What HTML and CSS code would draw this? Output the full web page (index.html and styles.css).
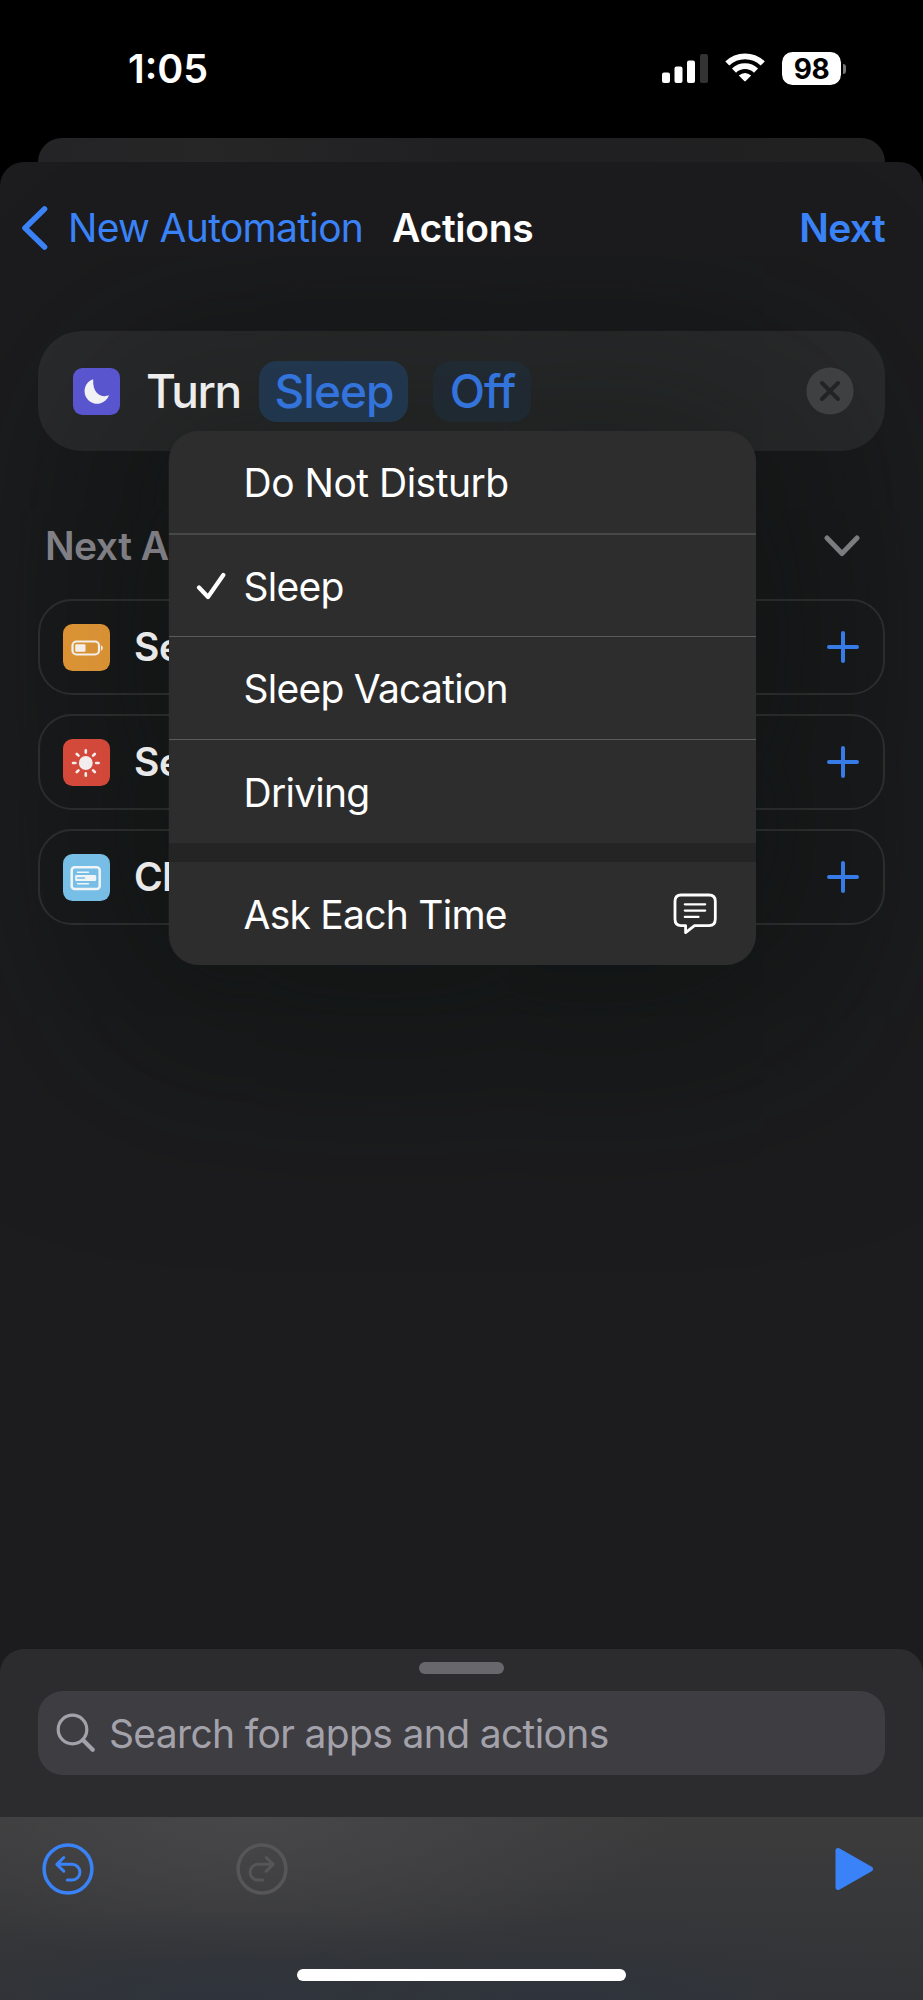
FILE: index.html
```html
<!DOCTYPE html>
<html lang="en">
<head>
<meta charset="utf-8">
<title>Actions</title>
<link rel="stylesheet" href="styles.css">
</head>
<body>
<div class="phone">
  <header class="status">
    <span class="time">1:05</span>
    <div class="status-icons">
      <svg class="signal" width="46" height="30" viewBox="0 0 46 30"><g fill="#fff"><rect x="0" y="18.500" width="8" height="10.500" rx="2"/><rect x="12.500" y="12.500" width="8" height="16.500" rx="2"/><rect x="25" y="6.500" width="8" height="22.500" rx="2"/></g><rect x="38" y="0" width="8" height="29" rx="2" fill="#333"/></svg>
      <svg class="wifi" width="40" height="30" viewBox="0 0 40 30"><g fill="none" stroke="#fff" stroke-width="5.800"><path d="M2.300 10.500A25.500 25.500 0 0 1 37.700 10.500"/><path d="M9 17.600A15.700 15.700 0 0 1 31 17.600"/></g><path d="M13.800 22.600Q20 17.600 26.200 22.600L21 27.800Q20 28.800 19 27.800Z" fill="#fff"/></svg>
      <div class="battery">98</div>
      <div class="battery-cap"></div>
    </div>
  </header>
  <div class="sheet-behind"></div>
  <main class="sheet">
    <div class="menu-shade"></div>
    <nav class="nav">
      <a class="back">
        <svg width="28" height="46" viewBox="0 0 28 46" fill="none" stroke="#3a82f7" stroke-width="5.600" stroke-linecap="round" stroke-linejoin="round"><path d="M24.500 4L5 23L24.500 42"/></svg>
        <span class="back-label">New Automation</span>
      </a>
      <h1 class="title">Actions</h1>
      <a class="next">Next</a>
    </nav>
    <section class="action-card">
      <svg class="app-icon" width="47" height="47" viewBox="0 0 47 47"><rect width="47" height="47" rx="9.500" fill="#5956d0"/><path d="M20.200 11.200A12.600 12.600 0 1 0 36 27.300C29 30 19.300 26.500 20.200 11.200Z" fill="#f3f3f5"/></svg>
      <span class="verb">Turn</span>
      <span class="token token-focus">Sleep</span>
      <span class="token token-state">Off</span>
      <svg class="clear" width="48" height="48" viewBox="0 0 48 48"><circle cx="24" cy="24" r="23.600" fill="#404142"/><path d="M16 16L32 32M32 16L16 32" stroke="#232424" stroke-width="4" stroke-linecap="round"/></svg>
    </section>
    <div class="section-head">
      <h2 class="section-title">Next Action</h2>
      <svg width="37" height="22" viewBox="0 0 37 22" fill="none" stroke="#7e7e82" stroke-width="5" stroke-linecap="round" stroke-linejoin="round"><path d="M4 3L19 18.500L34 3"/></svg>
    </div>
    <div class="suggestions">
      <div class="row">
        <svg class="app-icon" width="47" height="47" viewBox="0 0 47 47"><rect width="47" height="47" rx="9.500" fill="#dc9435"/><rect x="9.500" y="17.500" width="26.500" height="13" rx="4" fill="none" stroke="#f6f3ef" stroke-width="2.200"/><rect x="12.200" y="20.200" width="10.300" height="7.600" rx="1" fill="#f6f3ef"/><path d="M38 21.200Q39.800 22 39.800 24T38 26.800Z" fill="#f6f3ef"/></svg>
        <span class="row-label">Set</span>
        <svg class="plus" width="32" height="32" viewBox="0 0 32 32" stroke="#377dea" stroke-width="4" stroke-linecap="round"><path d="M2 16H30M16 2V30"/></svg>
      </div>
      <div class="row">
        <svg class="app-icon" width="47" height="47" viewBox="0 0 47 47"><rect width="47" height="47" rx="9.500" fill="#d64a3b"/><circle cx="22.800" cy="24" r="6.900" fill="#f5f1f0"/><g stroke="#f5f1f0" stroke-width="2.600" stroke-linecap="round"><path d="M22.800 11.200V13.600M22.800 34.400V36.800M10 24H12.400M33.200 24H35.600M13.800 15L15.500 16.700M30.100 31.300L31.800 33M31.800 15L30.100 16.700M15.500 31.300L13.800 33"/></g></svg>
        <span class="row-label">Set</span>
        <svg class="plus" width="32" height="32" viewBox="0 0 32 32" stroke="#377dea" stroke-width="4" stroke-linecap="round"><path d="M2 16H30M16 2V30"/></svg>
      </div>
      <div class="row">
        <svg class="app-icon" width="47" height="47" viewBox="0 0 47 47"><rect width="47" height="47" rx="9.500" fill="#79c1e9"/><rect x="8.700" y="13.300" width="28" height="21.700" rx="3" fill="none" stroke="#f4f8fa" stroke-width="2.500"/><rect x="12.200" y="21" width="21" height="6" rx="1.300" fill="#f4f8fa"/><path d="M14.500 18.300H25.500M14.500 29.800H25.500" stroke="#f4f8fa" stroke-width="1.400" stroke-linecap="round"/><path d="M14.500 24H21.500" stroke="#77bee5" stroke-width="1.400" stroke-linecap="round"/></svg>
        <span class="row-label">Ch</span>
        <svg class="plus" width="32" height="32" viewBox="0 0 32 32" stroke="#377dea" stroke-width="4" stroke-linecap="round"><path d="M2 16H30M16 2V30"/></svg>
      </div>
    </div>
    <div class="menu">
      <div class="menu-item first"><span class="m-dnd">Do Not Disturb</span></div>
      <div class="menu-item checked">
        <svg class="check" width="30" height="30" viewBox="0 0 30 30" fill="none" stroke="#fff" stroke-width="4.200" stroke-linecap="round" stroke-linejoin="round"><path d="M3 16.500L12 26L27.300 4"/></svg>
        <span>Sleep</span>
      </div>
      <div class="menu-item"><span>Sleep Vacation</span></div>
      <div class="menu-item last"><span>Driving</span></div>
      <div class="menu-gap"></div>
      <div class="menu-item ask">
        <span>Ask Each Time</span>
        <svg width="44" height="42" viewBox="0 0 44 42" fill="none" stroke="#fff" stroke-linecap="round" stroke-linejoin="round"><path stroke-width="2.800" d="M8 2H36Q42.300 2 42.300 8.300V26Q42.300 32.600 36 32.600H21.500L12.600 39.600V32.600H8Q2 32.600 2 26V8.300Q2 2 8 2Z"/><path stroke-width="2.200" d="M11.800 11.300H32.200M11.800 17.600H32.200M11.800 23.900H25.500"/></svg>
      </div>
    </div>
  </main>
  <section class="drawer">
    <div class="grabber"></div>
    <div class="search">
      <svg width="40" height="40" viewBox="0 0 40 40" fill="none" stroke="#a3a2aa" stroke-linecap="round"><circle cx="16.500" cy="16.500" r="14.300" stroke-width="3.200"/><path d="M27 27L36.700 36.700" stroke-width="4.200"/></svg>
      <span class="placeholder">Search for apps and actions</span>
    </div>
  </section>
  <footer class="toolbar">
    <div class="tools">
      <svg width="52" height="52" viewBox="0 0 52 52" fill="none" stroke="#3a82f7" stroke-linecap="round" stroke-linejoin="round"><circle cx="26" cy="26" r="23.900" stroke-width="3.500"/><path stroke-width="3" d="M21.800 14.500L14.800 21.300L21.800 28.100M15 21.300H30A7.900 7.900 0 0 1 30 37.100H25.300"/></svg>
      <svg class="redo" width="52" height="52" viewBox="0 0 52 52" fill="none" stroke="#565658" stroke-linecap="round" stroke-linejoin="round"><circle cx="26" cy="26" r="23.900" stroke-width="3.500"/><path stroke-width="3" d="M30.200 14.500L37.200 21.300L30.200 28.100M37 21.300H22A7.900 7.900 0 0 0 22 37.100H26.700"/></svg>
      <svg class="play" width="39" height="44" viewBox="0 0 39 44"><path d="M3 3.500L35.500 22L3 40.500Z" fill="#3a82f7" stroke="#3a82f7" stroke-width="5" stroke-linejoin="round"/></svg>
    </div>
    <div class="home-indicator"></div>
  </footer>
</div>
</body>
</html>
```
FILE: styles.css
```css
* { box-sizing: border-box; margin: 0; }
body { background: #000; font-family: Inter, "Liberation Sans", sans-serif; font-size: 39px; color: #fff; }
svg { display: block; flex: none; }
.phone { display: flex; flex-direction: column; width: 923px; height: 2000px; overflow: hidden; background: #000; white-space: nowrap; }

.status { display: flex; justify-content: space-between; height: 138px; padding: 0 77px 0 128px; }
.time { font-size: 39.5px; font-weight: 600; line-height: 48px; margin-top: 45px; letter-spacing: 0; }
.status-icons { display: flex; align-items: flex-start; padding-top: 52px; }
.signal { margin-top: 2px; }
.wifi { margin: 1px 0 0 17px; }
.battery { width: 59px; height: 33px; margin-left: 17px; border-radius: 10.5px; background: #fff; color: #000; font-size: 28px; font-weight: 700; line-height: 34px; text-align: center; letter-spacing: -0.5px; }
.battery-cap { width: 3px; height: 10px; margin: 12px 0 0 2px; border-radius: 0 4px 4px 0; background: #777; }

.sheet-behind { height: 24px; margin: 0 38px; border-radius: 24px 24px 0 0; background: linear-gradient(90deg, #242426, #262627 20%, #202022 50%, #212122); flex: none; }
.sheet { position: relative; display: flex; flex-direction: column; flex: 1; margin-bottom: -24px; border-radius: 24px 24px 0 0; background: #1c1c1e; overflow: hidden; }
.nav { position: relative; display: flex; align-items: center; height: 132px; padding: 0 38px 0 20px; color: #3a82f7; }
.back { display: flex; align-items: center; width: 372px; gap: 20px; }
.back-label { letter-spacing: -0.68px; padding-bottom: 2px; }
.title { flex: 1; padding-bottom: 2px; font-size: 39px; font-weight: 600; letter-spacing: -0.3px; color: #fff; }
.next { padding-bottom: 2px; font-weight: 600; letter-spacing: -0.7px; }

.action-card { position: relative; display: flex; align-items: center; height: 120px; margin: 37px 38px 0; padding: 0 31px 0 35px; border-radius: 44px; background: rgba(255, 255, 255, 0.062); font-size: 46px; font-weight: 500; flex: none; }
.verb { width: 113px; margin-left: 26px; color: #f1f1f1; letter-spacing: -1.4px; }
.token { height: 61px; border-radius: 18px; color: #3577e2; line-height: 61px; text-align: center; letter-spacing: -1px; }
.token-focus { width: 149px; padding-left: 1px; background: #22384f; }
.token-state { width: 98px; margin-left: 25px; padding-left: 1px; background: #212b33; }
.clear { margin-left: auto; }

.section-head { position: relative; display: flex; align-items: center; justify-content: space-between; height: 52px; margin: 69px 63px 0 45px; flex: none; }
.section-title { font-size: 39px; font-weight: 600; color: #818187; letter-spacing: -0.5px; padding-bottom: 1px; }
.suggestions { position: relative; display: flex; flex-direction: column; gap: 19px; margin: 27px 38px 0; }
.row { display: flex; align-items: center; height: 96px; padding: 0 24px 0 23px; border: 2px solid rgba(255, 255, 255, 0.09); border-radius: 34px; }
.row-label { margin-left: 24px; font-weight: 600; color: #f1f1f1; letter-spacing: -0.4px; padding-bottom: 1px; }
.plus { margin-left: auto; }

.menu-shade { position: absolute; left: 168px; top: 269px; width: 587px; height: 534px; border-radius: 30px; box-shadow: 0 0 200px 70px rgba(10, 16, 12, 0.55); }
.menu { position: absolute; left: 168.5px; top: 269px; width: 587px; height: 534px; border-radius: 30px; overflow: hidden; background: #2d2d2e; box-shadow: 0 0 160px 20px rgba(0, 0, 0, 0.07); display: flex; flex-direction: column; letter-spacing: -0.75px; }
.menu-item { display: flex; align-items: center; height: 103px; padding: 1px 0 0 75px; border-bottom: 1px solid #5a5b5b; flex: none; }
.menu-item.first { height: 104px; padding-top: 0; border-bottom: 2px solid #464747; }
.m-dnd { letter-spacing: -0.5px; }
.menu-item.checked { height: 102px; padding-left: 27px; }
.check { margin-right: 18px; }
.menu-item.last { padding-top: 2px; border-bottom: 0; }
.menu-gap { height: 19px; background: #242425; flex: none; }
.menu-item.ask { justify-content: space-between; padding-right: 39px; border-bottom: 0; }

.drawer { position: relative; height: 168px; padding: 13px 38px 0; border-radius: 24px 24px 0 0; background: #2c2c2e; flex: none; }
.grabber { width: 85px; height: 12px; margin: 0 auto; border-radius: 6px; background: #68676c; }
.search { display: flex; align-items: center; height: 84px; margin-top: 17px; padding-left: 18px; gap: 13px; border-radius: 25px; background: #3e3d42; color: #a3a2aa; }
.placeholder { letter-spacing: -0.65px; padding-top: 1px; }
.toolbar { position: relative; display: flex; flex-direction: column; height: 183px; flex: none; background: radial-gradient(ellipse 380px 90px at 560px 100%, #2f343c, transparent), radial-gradient(ellipse 350px 90px at 210px 100%, #2f343c, transparent), radial-gradient(ellipse 420px 150px at 250px 0, #474749, transparent), linear-gradient(#3c3c3d, #323335); }
.tools { display: flex; align-items: center; height: 104px; padding: 0 49px 0 42px; }
.redo { margin-left: 142px; }
.play { margin-left: auto; }
.home-indicator { width: 329px; height: 12px; margin: 48px auto 0; border-radius: 6px; background: #fff; }
```
